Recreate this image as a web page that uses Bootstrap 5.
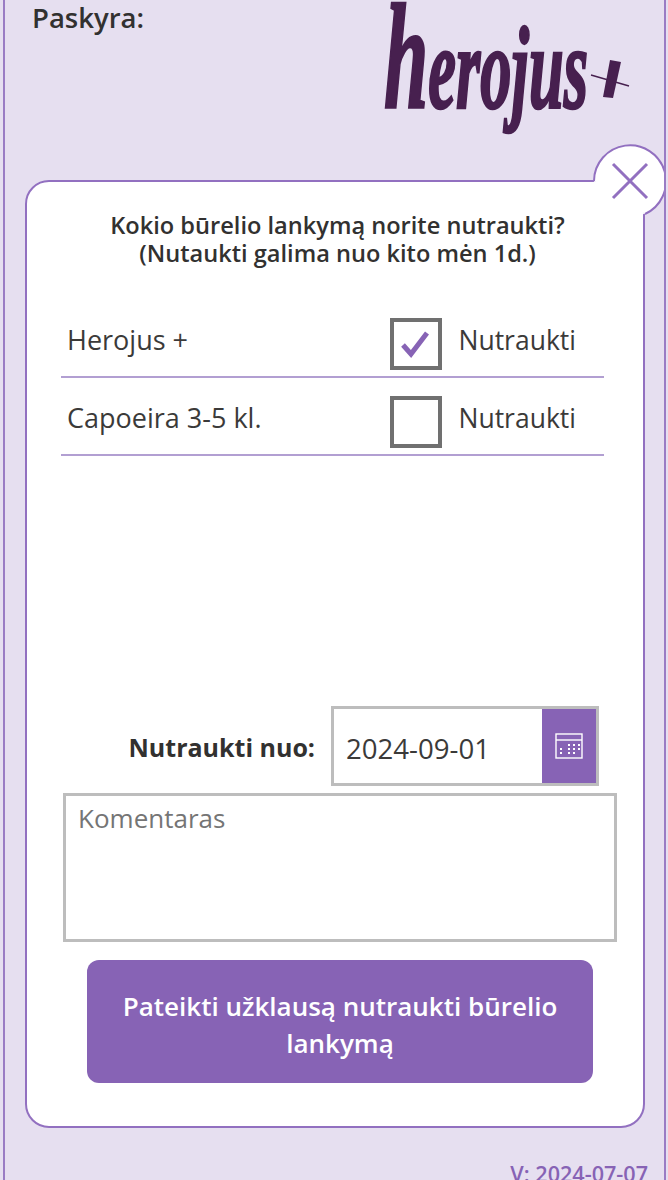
<!DOCTYPE html>
<html lang="lt">
<head>
  <meta charset="UTF-8">
  <title>Būrelio nutraukimas</title>
  <link href="https://cdn.jsdelivr.net/npm/bootstrap@5.3.3/dist/css/bootstrap.min.css" rel="stylesheet">
  <style>
    html, body { height: 100%; }
    body { font-family: "Open Sans", "Noto Sans", sans-serif; color: #323130; background: #e6dff0; overflow: hidden; }
    .page-frame { height: 1180px; margin: 0 2px 0 3px; padding: 0 20px; border-left: 2px solid #9a7cc4; border-right: 2px solid #9a7cc4; overflow: hidden; }
    .top-bar { height: 180px; padding: 0 0 0 7px; }
    .account-label { font-size: 27.5px; font-weight: 600; line-height: 36px; }
    .brand-logo { width: 260px; height: 140px; margin-right: 4px; }
    .brand-logo text { font-family: "Liberation Serif", serif; font-style: italic; font-weight: 700; font-size: 88px; fill: #47204f; stroke: #47204f; stroke-width: 2px; }
    .brand-logo .logo-tall { font-size: 112px; }
    .panel { height: 948px; width: 620px; background: #fff; border: 2px solid #9270c0; border-radius: 24px; padding: 29px 26px 0 34px; position: relative; }
    .close-round { position: absolute; top: -38px; right: -24px; width: 74px; height: 74px; background: none; border: 0; padding: 0; }
    .panel-title { font-size: 23.6px; font-weight: 600; line-height: 28px; margin-left: -3px; }
    .item-list { margin-top: 33px; margin-right: 13px; }
    .item-row { height: 78px; border-bottom: 2px solid #b29fd2; padding: 0 0 6px 6px; }
    .item-name { font-size: 27px; line-height: 32px; margin-bottom: 14px; color: #3b3a39; }
    .quit-check { width: 52px; height: 52px; border: 4px solid #707070; background: #fff; margin-right: 16px; }
    .quit-text { font-size: 26.5px; margin-right: 28px; margin-bottom: 6px; color: #3b3a39; }
    .date-block { margin-top: 250px; }
    .date-label { width: 270px; text-align: right; font-size: 25px; font-weight: 700; padding: 3px 16px 0 0; }
    .date-box { width: 268px; height: 80px; border: 3px solid #bdbdbd; background: #fff; }
    .date-value { font-size: 27.6px; padding: 5px 0 0 12px; color: #3b3a39; }
    .date-btn { width: 54px; background: #8763b5; }
    .comment-box { display: block; width: 554px; height: 149px; margin: 7px 0 0 2px; border: 3px solid #bdbdbd; border-radius: 0; padding: 5px 12px; font-size: 26px; line-height: 34px; resize: none; color: #323130; }
    .comment-box::placeholder { color: #757575; }
    .send-btn { display: block; width: 506px; height: 123px; margin: 18px 0 0 26px; background: #8763b5; border: 0; border-radius: 12px; color: #fff; font-size: 26px; font-weight: 600; line-height: 37px; padding: 6px 20px 0; }
    .version-text { color: #8763b5; font-size: 21.6px; font-weight: 600; text-align: right; margin-top: 30px; margin-right: -4px; }
  </style>
</head>
<body>
  <div class="page-frame">
    <div class="top-bar d-flex justify-content-between align-items-start">
      <div class="account-label">Paskyra:</div>
      <svg class="brand-logo" viewBox="0 0 260 140" role="img" aria-label="herojus+">
        <text transform="translate(4 108) scale(1 1.35)" textLength="204" lengthAdjust="spacingAndGlyphs"><tspan class="logo-tall">h</tspan>erojus</text>
        <path d="M230 60 L241 62 L233 98 L223 97 Z" fill="#47204f"/>
        <path d="M211 75 L249 86" stroke="#47204f" stroke-width="1.5"/>
      </svg>
    </div>

    <div class="panel">
      <svg class="close-round" viewBox="0 0 74 74" role="button" aria-label="Uždaryti">
        <path d="M1 37 A36 36 0 1 1 52 70" fill="#fff" stroke="#9270c0" stroke-width="2"/>
        <path d="M1 37 L52 70 L20 72 L0 44 Z" fill="#fff"/>
        <path d="M20 20 L54 54 M54 20 L20 54" stroke="#9270c0" stroke-width="3" fill="none"/>
      </svg>

      <div class="panel-title text-center">Kokio būrelio lankymą norite nutraukti?<br>(Nutaukti galima nuo kito mėn 1d.)</div>

      <div class="item-list">
        <div class="item-row d-flex justify-content-between align-items-end">
          <div class="item-name">Herojus +</div>
          <div class="d-flex align-items-center">
            <div class="quit-check d-flex align-items-center justify-content-center">
              <svg width="32" height="30" viewBox="0 0 32 30"><path d="M3 16 L11 25 L27 4" fill="none" stroke="#8763b5" stroke-width="5"/></svg>
            </div>
            <span class="quit-text">Nutraukti</span>
          </div>
        </div>
        <div class="item-row d-flex justify-content-between align-items-end">
          <div class="item-name">Capoeira 3-5 kl.</div>
          <div class="d-flex align-items-center">
            <div class="quit-check"></div>
            <span class="quit-text">Nutraukti</span>
          </div>
        </div>
      </div>

      <div class="date-block d-flex align-items-center">
        <div class="date-label">Nutraukti nuo:</div>
        <div class="date-box d-flex">
          <div class="date-value flex-grow-1 d-flex align-items-center">2024-09-01</div>
          <div class="date-btn d-flex align-items-center justify-content-center">
            <svg width="28" height="26" viewBox="0 0 28 26" fill="none" stroke="#fff" stroke-width="1.4">
              <rect x="1" y="1" width="26" height="24"/><path d="M1 7 H27"/>
              <path d="M13 12h2M18 12h2M23 12h2M5 16h2M13 16h2M18 16h2M23 16h2M5 20h2M13 20h2M18 20h2" stroke-width="2"/>
            </svg>
          </div>
        </div>
      </div>

      <textarea class="comment-box form-control" placeholder="Komentaras"></textarea>

      <button type="button" class="send-btn btn">Pateikti užklausą nutraukti būrelio lankymą</button>
    </div>

    <div class="version-text">V: 2024-07-07</div>
  </div>
  <script src="https://cdn.jsdelivr.net/npm/bootstrap@5.3.3/dist/js/bootstrap.bundle.min.js"></script>
</body>
</html>
